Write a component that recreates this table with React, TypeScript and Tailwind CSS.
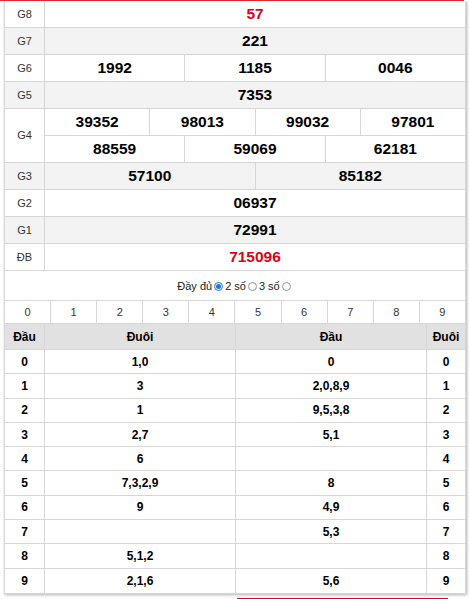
import React from "react";

type Prize = {
  label: string;
  rows: string[][];
  red?: boolean;
  grey?: boolean;
};

const prizes: Prize[] = [
  { label: "G8", rows: [["57"]], red: true },
  { label: "G7", rows: [["221"]], grey: true },
  { label: "G6", rows: [["1992", "1185", "0046"]] },
  { label: "G5", rows: [["7353"]], grey: true },
  { label: "G4", rows: [["39352", "98013", "99032", "97801"], ["88559", "59069", "62181"]] },
  { label: "G3", rows: [["57100", "85182"]], grey: true },
  { label: "G2", rows: [["06937"]] },
  { label: "G1", rows: [["72991"]], grey: true },
  { label: "ĐB", rows: [["715096"]], red: true },
];

const loto = [
  ["0", "1,0", "0", "0"],
  ["1", "3", "2,0,8,9", "1"],
  ["2", "1", "9,5,3,8", "2"],
  ["3", "2,7", "5,1", "3"],
  ["4", "6", "", "4"],
  ["5", "7,3,2,9", "8", "5"],
  ["6", "9", "4,9", "6"],
  ["7", "", "5,3", "7"],
  ["8", "5,1,2", "", "8"],
  ["9", "2,1,6", "5,6", "9"],
];

function Radio({ checked }: { checked?: boolean }) {
  return checked ? (
    <span className="inline-flex w-[9px] h-[9px] rounded-full border border-[#1a73e8] items-center justify-center mx-[2px]">
      <span className="w-[5px] h-[5px] rounded-full bg-[#1a73e8]" />
    </span>
  ) : (
    <span className="inline-block w-[9px] h-[9px] rounded-full border border-[#9a9a9a] bg-white mx-[2px]" />
  );
}

export default function App() {
  return (
    <div
      className="w-[469px] h-[599px] bg-white overflow-hidden text-[#222]"
      style={{ fontFamily: '"Liberation Sans", Arial, sans-serif' }}
    >
      <div className="w-[464px] h-[1px] bg-[#f0282d]" />
      <div className="ml-[4px] w-[462px] border-x border-b border-[#d6d6d6] shadow-[1px_1px_3px_rgba(0,0,0,0.3)]">
        {/* ket qua */}
        {prizes.map((p) => (
          <div
            key={p.label}
            className={`flex border-b border-[#d6d6d6] ${p.grey ? "bg-[#f3f3f3]" : "bg-white"}`}
          >
            <div className="w-[40px] shrink-0 border-r border-[#d6d6d6] flex items-center justify-center text-[11px] text-[#333]">
              {p.label}
            </div>
            <div className="flex-1 flex flex-col">
              {p.rows.map((r, i) => (
                <div
                  key={i}
                  className={`flex ${i < p.rows.length - 1 ? "h-[27px] border-b border-[#d6d6d6]" : "h-[26px]"}`}
                >
                  {r.map((n, j) => (
                    <div
                      key={j}
                      className={`flex-1 basis-0 flex items-center justify-center text-[15.5px] font-bold ${
                        p.red ? "text-[#e0001a]" : "text-black"
                      } ${j < r.length - 1 ? "border-r border-[#d6d6d6]" : ""}`}
                    >
                      {n}
                    </div>
                  ))}
                </div>
              ))}
            </div>
          </div>
        ))}

        {/* chon kieu */}
        <div className="h-[29px] flex items-center justify-center text-[11px] text-[#222] pt-[2px]">
          <span>Đầy đủ</span>
          <Radio checked />
          <span>2 số</span>
          <Radio />
          <span>3 số</span>
          <Radio />
        </div>

        {/* loto */}
        <div className="flex h-[24px] border-y border-[#d6d6d6] text-[11px] text-[#333]">
          {["0", "1", "2", "3", "4", "5", "6", "7", "8", "9"].map((d, i) => (
            <div
              key={d}
              className={`flex-1 basis-0 flex items-center justify-center ${i < 9 ? "border-r border-[#d6d6d6]" : ""}`}
            >
              {d}
            </div>
          ))}
        </div>
        <div className="flex h-[26px] bg-[#e1e1e1] border-b border-[#d6d6d6] text-[12px] font-bold text-black">
          <div className="w-[40px] border-r border-[#d6d6d6] flex items-center justify-center">Đầu</div>
          <div className="w-[191px] border-r border-[#d6d6d6] flex items-center justify-center">Đuôi</div>
          <div className="w-[191px] border-r border-[#d6d6d6] flex items-center justify-center">Đầu</div>
          <div className="flex-1 flex items-center justify-center">Đuôi</div>
        </div>
        {loto.map((r, i) => (
          <div
            key={r[0]}
            className={`flex h-[24.3px] text-[12px] font-bold text-black ${i < loto.length - 1 ? "border-b border-[#d6d6d6]" : ""}`}
          >
            <div className="w-[40px] border-r border-[#d6d6d6] flex items-center justify-center">{r[0]}</div>
            <div className="w-[191px] border-r border-[#d6d6d6] flex items-center justify-center">{r[1]}</div>
            <div className="w-[191px] border-r border-[#d6d6d6] flex items-center justify-center">{r[2]}</div>
            <div className="flex-1 flex items-center justify-center">{r[3]}</div>
          </div>
        ))}
      </div>
      <div className="mt-[4px] ml-[237px] w-[211px] h-[2px] bg-[#d0101a]" />
    </div>
  );
}
